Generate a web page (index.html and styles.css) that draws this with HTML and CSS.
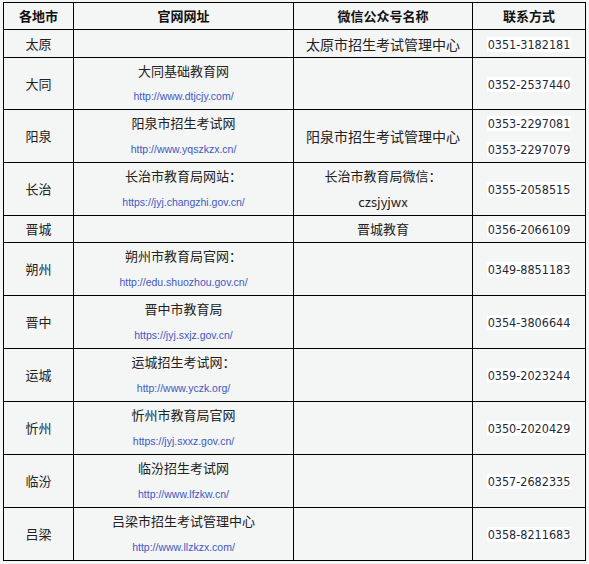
FILE: index.html
```html
<!DOCTYPE html>
<html lang="zh-CN">
<head>
<meta charset="utf-8">
<title>山西各地市招生考试机构</title>
<link rel="stylesheet" href="styles.css">
</head>
<body>
<table class="grid">
  <colgroup>
    <col class="c-city">
    <col class="c-site">
    <col class="c-wx">
    <col class="c-tel">
  </colgroup>
  <thead>
    <tr class="r-head">
      <th>各地市</th>
      <th>官网网址</th>
      <th>微信公众号名称</th>
      <th>联系方式</th>
    </tr>
  </thead>
  <tbody>
    <tr class="r-first">
      <td>太原</td>
      <td></td>
      <td class="wx-big">太原市招生考试管理中心</td>
      <td><span class="tel">0351-3182181</span></td>
    </tr>
    <tr class="r-short">
      <td>大同</td>
      <td><p>大同基础教育网</p><p class="url">http://www.dtjcjy.com/</p></td>
      <td></td>
      <td><span class="tel">0352-2537440</span></td>
    </tr>
    <tr class="r-two">
      <td>阳泉</td>
      <td><p>阳泉市招生考试网</p><p class="url">http://www.yqszkzx.cn/</p></td>
      <td class="wx-big">阳泉市招生考试管理中心</td>
      <td><p><span class="tel">0353-2297081</span></p><p><span class="tel">0353-2297079</span></p></td>
    </tr>
    <tr class="r-two">
      <td>长治</td>
      <td><p>长治市教育局网站：</p><p class="url">https://jyj.changzhi.gov.cn/</p></td>
      <td><p>长治市教育局微信：</p><p>czsjyjwx</p></td>
      <td><span class="tel">0355-2058515</span></td>
    </tr>
    <tr class="r-one">
      <td>晋城</td>
      <td></td>
      <td>晋城教育</td>
      <td><span class="tel">0356-2066109</span></td>
    </tr>
    <tr class="r-two">
      <td>朔州</td>
      <td><p>朔州市教育局官网：</p><p class="url">http://edu.shuozhou.gov.cn/</p></td>
      <td></td>
      <td><span class="tel">0349-8851183</span></td>
    </tr>
    <tr class="r-two">
      <td>晋中</td>
      <td><p>晋中市教育局</p><p class="url">https://jyj.sxjz.gov.cn/</p></td>
      <td></td>
      <td><span class="tel">0354-3806644</span></td>
    </tr>
    <tr class="r-two">
      <td>运城</td>
      <td><p>运城招生考试网：</p><p class="url">http://www.yczk.org/</p></td>
      <td></td>
      <td><span class="tel">0359-2023244</span></td>
    </tr>
    <tr class="r-two">
      <td>忻州</td>
      <td><p>忻州市教育局官网</p><p class="url">https://jyj.sxxz.gov.cn/</p></td>
      <td></td>
      <td><span class="tel">0350-2020429</span></td>
    </tr>
    <tr class="r-two">
      <td>临汾</td>
      <td><p>临汾招生考试网</p><p class="url">http://www.lfzkw.cn/</p></td>
      <td></td>
      <td><span class="tel">0357-2682335</span></td>
    </tr>
    <tr class="r-two">
      <td>吕梁</td>
      <td><p>吕梁市招生考试管理中心</p><p class="url">http://www.llzkzx.com/</p></td>
      <td></td>
      <td><span class="tel">0358-8211683</span></td>
    </tr>
  </tbody>
</table>
</body>
</html>
```

FILE: styles.css
```css
html, body {
  margin: 0;
  padding: 0;
  background: #f4f5f5;
}
body {
  padding: 2px 0 0 3px;
  font-family: "Noto Sans CJK SC", "Noto Sans", sans-serif;
  font-size: 13px;
  color: #222;
}
.grid {
  border-collapse: separate;
  border-spacing: 0;
  table-layout: fixed;
  width: 583px;
  border-top: 1px solid #000;
  border-left: 1px solid #000;
}
.c-city { width: 70px; }
.c-site { width: 220px; }
.c-wx { width: 179px; }
.c-tel { width: 113px; }
.grid th,
.grid td {
  border: 0;
  border-right: 1px solid #000;
  border-bottom: 1px solid #000;
  padding: 0;
  text-align: center;
  vertical-align: middle;
  line-height: 26px;
  overflow: hidden;
  white-space: nowrap;
}
.grid th {
  font-weight: bold;
  color: #111;
}
.r-head { height: 27px; }
.r-first { height: 28px; }
.r-one { height: 27px; }
.r-short { height: 52px; }
.r-two { height: 53px; }
.grid p {
  margin: 0;
  line-height: 26px;
  height: 26px;
}
.r-short p {
  line-height: 25.5px;
  height: 25.5px;
}
.url {
  font-family: "Liberation Sans", Arial, sans-serif;
  font-size: 10.5px;
  color: #4058c4;
}
.wx-big {
  font-size: 14px;
}
.tel {
  font-family: "DejaVu Sans Condensed", "DejaVu Sans", sans-serif;
  font-size: 12.5px;
  line-height: 1;
  color: #1f2a3a;
  background: #fff;
  padding: 0 1px;
}
```
